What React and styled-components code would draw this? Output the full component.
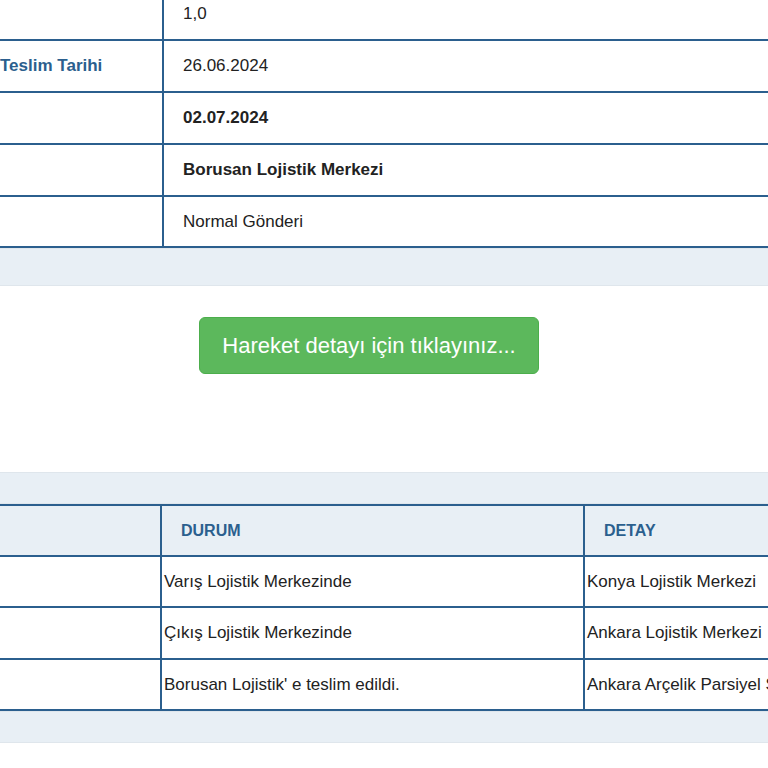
import React from "react";
import styled, { createGlobalStyle } from "styled-components";

const G = createGlobalStyle`
  html,body{margin:0;padding:0;background:#fff;font-family:"Liberation Sans",Arial,sans-serif;color:#222;overflow:hidden;}
`;
const Page = styled.div`width:768px;height:768px;overflow:hidden;`;
const Table = styled.table`
  border-collapse:collapse;width:${p => p.$w || "100%"};table-layout:fixed;
  td,th{border:2px solid #2b5f8e;font-size:17px;padding:0 0 0 ${p => p.$pad || 19}px;text-align:left;white-space:nowrap;overflow:hidden;}
`;
const Row = styled.tr`height:${p => p.$h || 52}px;`;
const Label = styled.td`color:#2b5f8e;font-weight:bold;border-left:none !important;`;
const Val = styled.td`font-weight:${p => (p.$b ? "bold" : "normal")};border-right:none !important;`;
const Band = styled.div`height:${p => p.$h}px;background:#e8eff5;border-top:1px solid #dfe6ec;border-bottom:1px solid #dfe6ec;`;
const BtnArea = styled.div`height:186px;padding-left:199px;padding-top:31px;box-sizing:border-box;`;
const Btn = styled.button`
  width:340px;height:57px;background:#5cb85c;border:1px solid #4cae4c;border-radius:6px;color:#fff;
  font-family:"Liberation Sans",Arial,sans-serif;font-size:22px;cursor:pointer;
`;
const Head = styled.th`color:#2b5f8e;font-weight:bold;background:#e8eff5;padding-left:19px !important;font-size:16px !important;`;

export default function App(){
  return <Page><G/>
    <Table $w="780px">
      <colgroup><col style={{width:163}}/><col/></colgroup>
      <tbody>
        <Row $h={40} style={{borderTop:"none"}}><Label style={{borderTop:"none"}}></Label><Val style={{borderTop:"none",verticalAlign:"top",paddingTop:4}}>1,0</Val></Row>
        <Row><Label style={{paddingLeft:0}}>Teslim Tarihi</Label><Val>26.06.2024</Val></Row>
        <Row><Label/><Val $b>02.07.2024</Val></Row>
        <Row><Label/><Val $b>Borusan Lojistik Merkezi</Val></Row>
        <Row $h={51}><Label/><Val>Normal Gönderi</Val></Row>
      </tbody>
    </Table>
    <Band $h={36}/>
    <BtnArea><Btn>Hareket detayı için tıklayınız...</Btn></BtnArea>
    <Band $h={30}/>
    <Table $w="800px" $pad={2}>
      <colgroup><col style={{width:161}}/><col style={{width:423}}/><col/></colgroup>
      <tbody>
        <Row $h={51}><Head style={{borderLeft:"none"}}></Head><Head>DURUM</Head><Head>DETAY</Head></Row>
        <Row $h={51}><Label/><Val style={{borderRight:"2px solid #2b5f8e"}}>Varış Lojistik Merkezinde</Val><Val>Konya Lojistik Merkezi</Val></Row>
        <Row $h={52}><Label/><Val style={{borderRight:"2px solid #2b5f8e"}}>Çıkış Lojistik Merkezinde</Val><Val>Ankara Lojistik Merkezi</Val></Row>
        <Row $h={51}><Label/><Val style={{borderRight:"2px solid #2b5f8e"}}>Borusan Lojistik' e teslim edildi.</Val><Val>Ankara Arçelik Parsiyel Sevkiyat</Val></Row>
      </tbody>
    </Table>
    <Band $h={30}/>
  </Page>;
}
